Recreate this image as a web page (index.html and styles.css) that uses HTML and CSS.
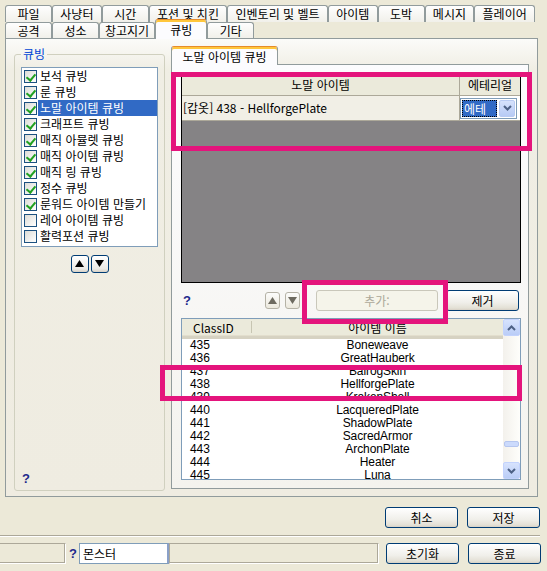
FILE: index.html
```html
<!DOCTYPE html>
<html lang="ko">
<head>
	<meta charset="utf-8">
	<title>큐빙</title>
	<link rel="stylesheet" href="styles.css">
</head>
<body>
	<div class="window">
		<div class="tabs">
			<div class="tab-row back">
				<div class="tab">파일</div>
				<div class="tab">사냥터</div>
				<div class="tab">시간</div>
				<div class="tab">포션 및 치킨</div>
				<div class="tab">인벤토리 및 벨트</div>
				<div class="tab">아이템</div>
				<div class="tab">도박</div>
				<div class="tab">메시지</div>
				<div class="tab">플레이어</div>
			</div>
			<div class="tab-row front">
				<div class="tab">공격</div>
				<div class="tab">성소</div>
				<div class="tab">창고지기</div>
				<div class="tab is-active">큐빙</div>
				<div class="tab">기타</div>
			</div>
		</div>

		<div class="pane">
			<fieldset class="group">
				<legend>큐빙</legend>
				<ul class="checklist">
					<li><span class="check is-on"></span><span class="label">보석 큐빙</span></li>
					<li><span class="check is-on"></span><span class="label">룬 큐빙</span></li>
					<li class="is-selected"><span class="check is-on"></span><span class="label">노말 아이템 큐빙</span></li>
					<li><span class="check is-on"></span><span class="label">크래프트 큐빙</span></li>
					<li><span class="check is-on"></span><span class="label">매직 아뮬렛 큐빙</span></li>
					<li><span class="check is-on"></span><span class="label">매직 아이템 큐빙</span></li>
					<li><span class="check is-on"></span><span class="label">매직 링 큐빙</span></li>
					<li><span class="check is-on"></span><span class="label">정수 큐빙</span></li>
					<li><span class="check is-on"></span><span class="label">룬워드 아이템 만들기</span></li>
					<li><span class="check"></span><span class="label">레어 아이템 큐빙</span></li>
					<li><span class="check"></span><span class="label">활력포션 큐빙</span></li>
				</ul>
				<div class="arrows">
					<button class="mini"><svg width="9" height="8" viewBox="0 0 9 8"><polygon points="4.5,0 9,7 0,7" /></svg></button>
					<button class="mini"><svg width="9" height="8" viewBox="0 0 9 8"><polygon points="0,0 9,0 4.5,7" /></svg></button>
				</div>
				<a class="help group-help">?</a>
			</fieldset>

			<div class="subtabs">
				<div class="subtab-strip">
					<div class="tab is-active">노말 아이템 큐빙</div>
				</div>
				<div class="subpane">
					<div class="grid">
						<div class="grid-head">
							<div class="gcell gname">노말 아이템</div>
							<div class="gcell geth">에테리얼</div>
						</div>
						<div class="grid-row">
							<div class="gcell gname">[갑옷] 438 - HellforgePlate</div>
							<div class="gcell geth">
								<div class="combo">
									<span class="combo-value">에테</span>
									<span class="combo-arrow"><svg width="9" height="6" viewBox="0 0 9 6"><polyline points="1,1 4.5,4.5 8,1" /></svg></span>
								</div>
							</div>
						</div>
						<div class="grid-empty"></div>
					</div>

					<div class="toolbar">
						<a class="help">?</a>
						<div class="minis">
							<button class="mini is-dim"><svg width="9" height="8" viewBox="0 0 9 8"><polygon points="4.5,0 9,7 0,7" /></svg></button>
							<button class="mini is-dim"><svg width="9" height="8" viewBox="0 0 9 8"><polygon points="0,0 9,0 4.5,7" /></svg></button>
						</div>
						<button class="btn add" disabled>추가:</button>
						<button class="btn remove">제거</button>
					</div>

					<div class="listview">
						<div class="lv-main">
							<div class="lv-head">
								<div class="lv-col col-id">ClassID</div>
								<div class="lv-col col-name">아이템 이름</div>
							</div>
							<div class="lv-rows">
								<div class="lv-row"><span class="col-id">435</span><span class="col-name">Boneweave</span></div>
								<div class="lv-row"><span class="col-id">436</span><span class="col-name">GreatHauberk</span></div>
								<div class="lv-row"><span class="col-id">437</span><span class="col-name">BalrogSkin</span></div>
								<div class="lv-row"><span class="col-id">438</span><span class="col-name">HellforgePlate</span></div>
								<div class="lv-row"><span class="col-id">439</span><span class="col-name">KrakenShell</span></div>
								<div class="lv-row"><span class="col-id">440</span><span class="col-name">LacqueredPlate</span></div>
								<div class="lv-row"><span class="col-id">441</span><span class="col-name">ShadowPlate</span></div>
								<div class="lv-row"><span class="col-id">442</span><span class="col-name">SacredArmor</span></div>
								<div class="lv-row"><span class="col-id">443</span><span class="col-name">ArchonPlate</span></div>
								<div class="lv-row"><span class="col-id">444</span><span class="col-name">Heater</span></div>
								<div class="lv-row"><span class="col-id">445</span><span class="col-name">Luna</span></div>
							</div>
						</div>
						<div class="scrollbar">
							<div class="sb-btn"><svg width="9" height="6" viewBox="0 0 9 6"><polyline points="1,5 4.5,1.5 8,5" /></svg></div>
							<div class="sb-track"><div class="sb-thumb"></div></div>
							<div class="sb-btn"><svg width="9" height="6" viewBox="0 0 9 6"><polyline points="1,1 4.5,4.5 8,1" /></svg></div>
						</div>
					</div>
				</div>
			</div>
		</div>

		<div class="actions">
			<button class="btn">취소</button>
			<button class="btn">저장</button>
		</div>
		<div class="sep"></div>
		<div class="status">
			<div class="frame frame-left"></div>
			<a class="help">?</a>
			<div class="edit">몬스터</div>
			<div class="frame frame-wide"></div>
			<button class="btn">초기화</button>
			<button class="btn">종료</button>
		</div>

		<!-- annotation boxes drawn over the screenshot -->
		<div class="mark mark-grid"></div>
		<div class="mark mark-add"></div>
		<div class="mark mark-row"></div>
	</div>
</body>
</html>
```

FILE: styles.css
```css
* {
	box-sizing: border-box;
}

body {
	margin: 0;
	background: #ece9d8;
	font-family: "Noto Sans CJK KR", "Liberation Sans", sans-serif;
	font-size: 12px;
	line-height: 14px;
	color: #000;
}

button {
	font-family: inherit;
	font-size: 12px;
	padding: 0;
	margin: 0;
	color: #000;
}

.window {
	position: relative;
	width: 547px;
	height: 571px;
	overflow: hidden;
}

/* top tab strip */
.tabs {
	padding: 5px 0 0 5px;
}

.tab-row {
	display: flex;
	height: 17px;
}

.tab-row.back {
	width: 530px;
}

.tab-row.front {
	height: 16px;
	position: relative;
	z-index: 2;
}

.tab {
	min-width: 47px;
	height: 100%;
	padding: 0 5px;
	border: 1px solid #919b9c;
	border-bottom: none;
	border-radius: 3px 3px 0 0;
	background: linear-gradient(#fefefe, #f1f0ea);
	text-align: center;
	line-height: 16px;
	white-space: nowrap;
}

.tab-row.back .tab {
	flex: 1 1 auto;
}

.tab.is-active {
	margin-top: -3px;
	height: 20px;
	min-width: 52px;
	background: #fcfcfe;
	border-top-color: #e68b2c;
	box-shadow: inset 0 2px 0 #ffc73c;
	padding-top: 2px;
}

/* main tab pane */
.pane {
	margin-left: 5px;
	width: 533px;
	height: 459px;
	border: 1px solid #919b9c;
	background: linear-gradient(#fbfbf9, #f0eee4 30px, #efece1);
	padding: 7px 8px 0 8px;
	display: flex;
	align-items: flex-start;
	position: relative;
	z-index: 1;
}

/* left group box */
.group {
	width: 151px;
	height: 444px;
	margin: 1px 6px 0 0;
	padding: 0 0 4px 0;
	border: 1px solid #d0d0bf;
	border-radius: 3px;
	display: flex;
	flex-direction: column;
	min-width: 0;
}

.group legend {
	margin-left: 6px;
	padding: 0 2px;
	color: #0046d5;
	line-height: 14px;
}

.checklist {
	list-style: none;
	margin: 6px 0 0 6px;
	padding: 0 0 0 2px;
	width: 137px;
	height: 180px;
	border: 1px solid #7f9db9;
	background: #fff;
}

.checklist li {
	display: flex;
	align-items: center;
	height: 16px;
}

.check {
	position: relative;
	width: 13px;
	height: 13px;
	flex: none;
	border: 1px solid #1c5180;
	background: linear-gradient(135deg, #dcdcd7, #fff);
}

.check.is-on::after {
	content: "";
	position: absolute;
	left: 3px;
	top: 1px;
	width: 4px;
	height: 7px;
	border-right: 2px solid #21a121;
	border-bottom: 2px solid #21a121;
	transform: rotate(40deg);
}

.label {
	flex: 1;
	margin-left: 1px;
	padding-left: 2px;
	height: 16px;
	line-height: 16px;
	white-space: nowrap;
}

.is-selected .label {
	background: #316ac5;
	color: #fff;
}

.arrows {
	display: flex;
	justify-content: center;
	gap: 2px;
	margin-top: 8px;
}

.mini {
	width: 18px;
	height: 18px;
	border: 1px solid #003c74;
	border-radius: 3px;
	background: linear-gradient(#fff, #ecebe6 80%, #d6d0c5);
	display: flex;
	align-items: center;
	justify-content: center;
}

.mini polygon {
	fill: #000;
}

.mini.is-dim {
	width: 15px;
	height: 17px;
	border-color: #b5b2a6;
	background: linear-gradient(#fcfcfb, #ece9de);
}

.mini.is-dim polygon {
	fill: #6d6a60;
}

.help {
	font-family: "Liberation Sans", sans-serif;
	font-weight: bold;
	font-size: 13px;
	color: #1f2a8c;
}

.group-help {
	margin: auto 0 0 7px;
}

/* right tab control */
.subtabs {
	width: 358px;
	display: flex;
	flex-direction: column;
}

.subtab-strip {
	display: flex;
	height: 18px;
	position: relative;
	z-index: 2;
}

.subtab-strip .tab.is-active {
	width: 107px;
	margin-top: 0;
	height: 19px;
	padding: 2px 0 0;
}

.subpane {
	height: 425px;
	border: 1px solid #919b9c;
	background: linear-gradient(#fcfcfe, #f4f3ee);
	padding: 8px 7px 0 9px;
}

/* item grid */
.grid {
	width: 340px;
	height: 210px;
	border: 1px solid #000;
	display: flex;
	flex-direction: column;
	background: #fff;
}

.grid-head,
.grid-row {
	display: flex;
}

.grid-head {
	height: 22px;
}

.grid-row {
	height: 25px;
}

.gcell {
	border-right: 1px solid #aca899;
	border-bottom: 1px solid #aca899;
	display: flex;
	align-items: center;
	white-space: nowrap;
}

.grid-head .gcell {
	justify-content: center;
	background: #ebeadb;
}

.grid-row .gcell {
	background: #f1efe6;
}

.gname {
	width: 278px;
}

.grid-row .gname {
	padding-left: 1px;
}

.geth {
	flex: 1;
	border-right: none;
}

.grid-row .geth {
	background: #fff;
}

.combo {
	width: 57px;
	height: 21px;
	border: 1px solid #7f9db9;
	background: #fff;
	display: flex;
	align-items: center;
	padding: 1px;
}

.combo-value {
	width: 35px;
	height: 17px;
	line-height: 17px;
	padding-left: 2px;
	background: #316ac5;
	color: #fff;
	outline: 1px dotted #000;
	outline-offset: -1px;
}

.combo-arrow {
	margin-left: auto;
	width: 16px;
	height: 17px;
	border: 1px solid #b9cbf3;
	border-radius: 2px;
	background: linear-gradient(#d6e2fc, #b7caf5);
	display: flex;
	align-items: center;
	justify-content: center;
}

.combo-arrow polyline,
.sb-btn polyline {
	fill: none;
	stroke: #4d6185;
	stroke-width: 2;
}

.grid-empty {
	flex: 1;
	background: #858385;
}

/* grid buttons */
.toolbar {
	display: flex;
	align-items: center;
	height: 21px;
	margin-top: 7px;
	padding: 0 2px 0 2px;
}

.minis {
	display: flex;
	gap: 5px;
	margin-left: auto;
}

.btn {
	width: 73px;
	height: 21px;
	border: 1px solid #003c74;
	border-radius: 3px;
	background: linear-gradient(#fff, #f0efea 60%, #e3e0d5 90%, #d6d0c5);
	line-height: 19px;
}

.btn.add {
	width: 122px;
	margin-left: 16px;
	border-color: #c9c7ba;
	background: #f5f4ea;
	color: #aca899;
}

.btn.remove {
	margin-left: 8px;
}

/* class list */
.listview {
	display: flex;
	width: 340px;
	height: 162px;
	margin-top: 7px;
	border: 1px solid #7f9db9;
	background: #fff;
	font-family: "Liberation Sans", "Noto Sans CJK KR", sans-serif;
	font-size: 12px;
	letter-spacing: -0.1px;
}

.lv-main {
	flex: 1;
	overflow: hidden;
}

.lv-head {
	display: flex;
	height: 20px;
	background: #ebeadb;
	border-bottom: 3px solid #d6d2c2;
	box-shadow: inset 0 -1px 0 #e2decd;
}

.lv-col {
	line-height: 17px;
	font-family: "Noto Sans CJK KR", "Liberation Sans", sans-serif;
	font-size: 12px;
	letter-spacing: 0;
}

.lv-head .col-id {
	width: 70px;
	padding-left: 11px;
	border-right: 1px solid #c7c5b2;
	margin: 2px 0 3px;
	line-height: 13px;
}

.lv-head .col-name {
	flex: 1;
	text-align: center;
}

.lv-rows {
	height: 141px;
	overflow: hidden;
}

.lv-row {
	display: flex;
	height: 13px;
	line-height: 13px;
}

.lv-row .col-id {
	width: 70px;
	padding-left: 8px;
}

.lv-row .col-name {
	flex: 1;
	text-align: center;
}

.scrollbar {
	width: 17px;
	display: flex;
	flex-direction: column;
	background: linear-gradient(90deg, #f3f1ec, #fefefb);
}

.sb-btn {
	height: 17px;
	border: 1px solid #c3d3fd;
	border-radius: 2px;
	background: linear-gradient(#d7e3fd, #bacdf7);
	display: flex;
	align-items: center;
	justify-content: center;
}

.sb-track {
	flex: 1;
	display: flex;
	flex-direction: column;
	justify-content: flex-end;
	padding: 0 1px 15px;
}

.sb-thumb {
	height: 6px;
	border: 1px solid #b5c6ef;
	border-radius: 2px;
	background: #cbdafc;
}

/* dialog buttons */
.actions {
	display: flex;
	justify-content: flex-end;
	gap: 9px;
	width: 547px;
	padding-right: 7px;
	margin-top: 10px;
}

.sep {
	width: 540px;
	height: 2px;
	margin-top: 7px;
	border-top: 1px solid #aca899;
	border-bottom: 1px solid #fff;
}

.status {
	display: flex;
	align-items: center;
	height: 21px;
	margin-top: 6px;
}

.frame {
	height: 21px;
	border: 1px solid #aca899;
	border-right-color: #fff;
	border-bottom-color: #fff;
	box-shadow: inset -1px -1px 0 #aca899;
}

.frame-left {
	width: 66px;
	border-left: none;
}

.status .help {
	width: 11px;
	padding-left: 3px;
}

.edit {
	width: 90px;
	height: 21px;
	margin-left: 2px;
	border: 1px solid #7f9db9;
	border-right: 2px solid #8aa0c8;
	background: #fff;
	padding-left: 3px;
	line-height: 19px;
}

.frame-wide {
	width: 210px;
}

.status .btn {
	margin-left: 7px;
}

.status .btn + .btn {
	margin-left: 9px;
}

/* annotation boxes */
.mark {
	position: absolute;
	border: 5px solid #e4147c;
	z-index: 5;
}

.mark-grid {
	left: 171px;
	top: 72px;
	width: 361px;
	height: 79px;
}

.mark-add {
	left: 302px;
	top: 280px;
	width: 146px;
	height: 44px;
}

.mark-row {
	left: 160px;
	top: 365px;
	width: 362px;
	height: 36px;
}
```
